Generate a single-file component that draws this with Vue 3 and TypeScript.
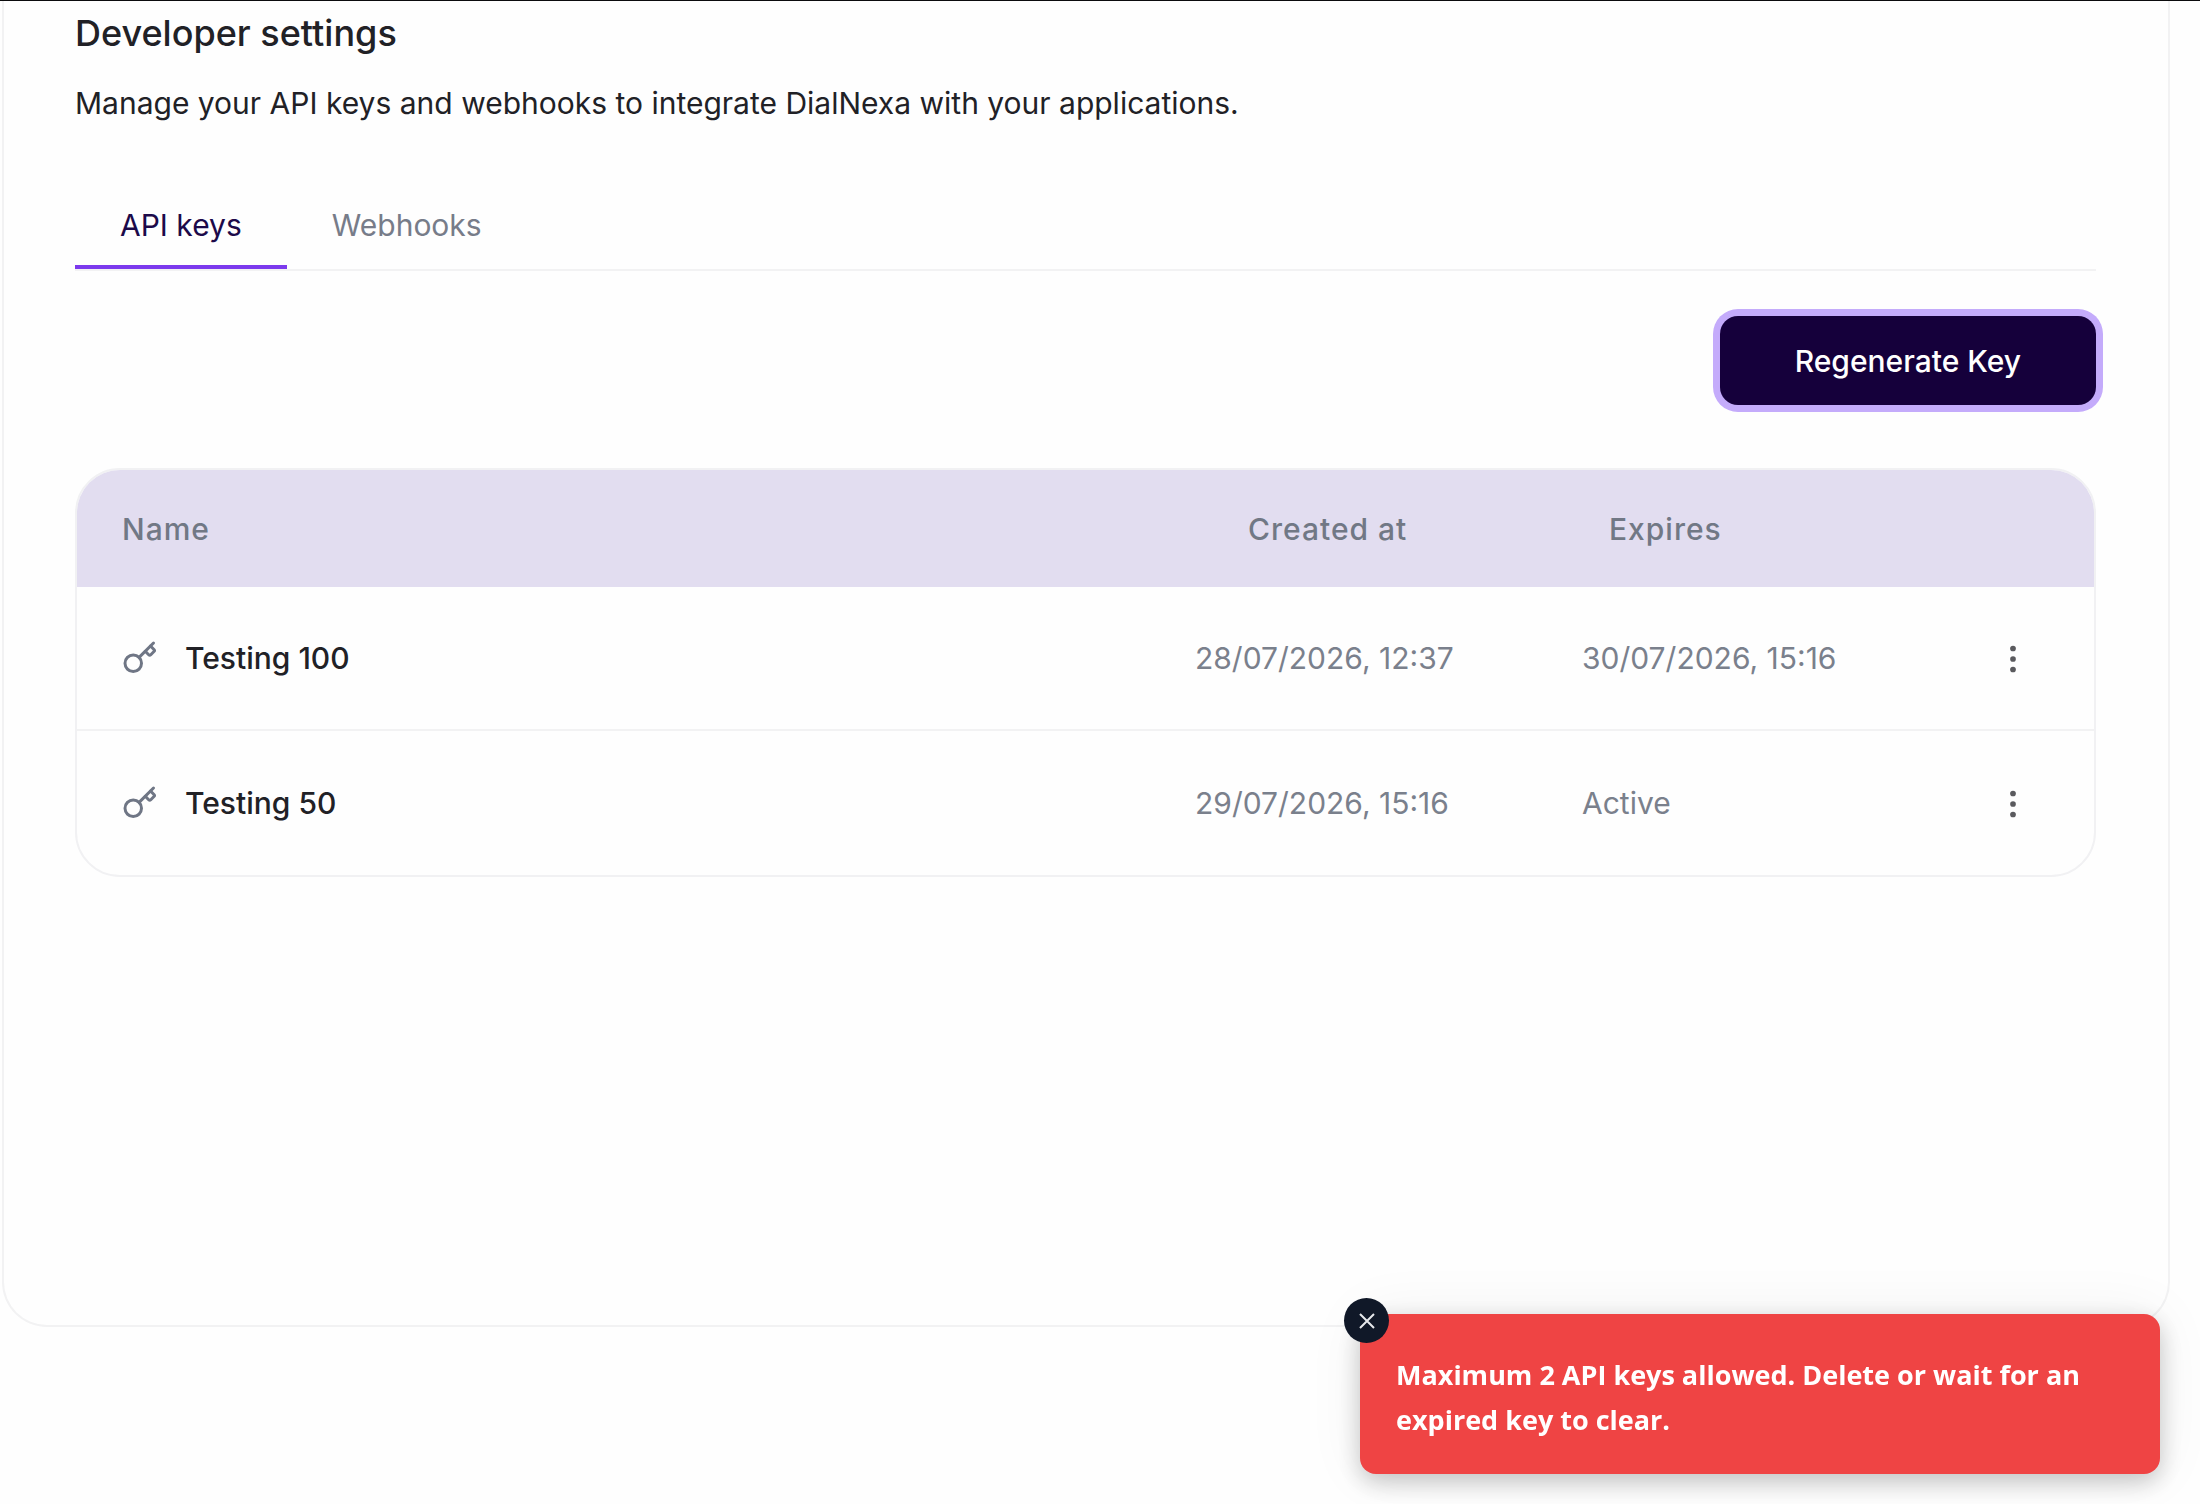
<script setup lang="ts">
import { ref } from 'vue'

interface ApiKey {
  id: number
  name: string
  createdAt: string
  expires: string
}

type TabId = 'keys' | 'webhooks'

const tabs: { id: TabId; label: string }[] = [
  { id: 'keys', label: 'API keys' },
  { id: 'webhooks', label: 'Webhooks' },
]

const activeTab = ref<TabId>('keys')
const toastVisible = ref(true)

const apiKeys: ApiKey[] = [
  { id: 1, name: 'Testing 100', createdAt: '28/07/2026, 12:37', expires: '30/07/2026, 15:16' },
  { id: 2, name: 'Testing 50', createdAt: '29/07/2026, 15:16', expires: 'Active' },
]
</script>

<template>
  <div class="page">
    <main class="panel">
      <h1 class="title">Developer settings</h1>
      <p class="subtitle">
        Manage your API keys and webhooks to integrate DialNexa with your applications.
      </p>

      <div class="tabs" role="tablist">
        <button
          v-for="tab in tabs"
          :key="tab.id"
          type="button"
          role="tab"
          class="tab"
          :class="{ active: activeTab === tab.id }"
          :aria-selected="activeTab === tab.id"
          @click="activeTab = tab.id"
        >
          {{ tab.label }}
        </button>
      </div>

      <div class="actions">
        <button type="button" class="primary" @click="toastVisible = true">Regenerate Key</button>
      </div>

      <div class="table-frame">
        <table class="keys">
          <thead>
            <tr>
              <th scope="col">Name</th>
              <th scope="col" class="created">Created at</th>
              <th scope="col" class="expires">Expires</th>
              <th class="menu-col" aria-label="Actions"></th>
            </tr>
          </thead>
          <tbody>
            <tr v-for="key in apiKeys" :key="key.id">
              <td>
                <div class="key-name">
                  <svg class="icon" viewBox="0 0 24 24" aria-hidden="true">
                    <path d="m15.5 7.5 2.3 2.3a1 1 0 0 0 1.4 0l2.1-2.1a1 1 0 0 0 0-1.4L19 4" />
                    <path d="m21 2-9.6 9.6" />
                    <circle cx="7.5" cy="15.5" r="5.5" />
                  </svg>
                  <span>{{ key.name }}</span>
                </div>
              </td>
              <td class="muted">{{ key.createdAt }}</td>
              <td class="muted">{{ key.expires }}</td>
              <td class="menu-col">
                <button type="button" class="menu" :aria-label="`Options for ${key.name}`">
                  <svg class="dots" viewBox="0 0 24 24" aria-hidden="true">
                    <circle cx="12" cy="5" r="1.9" />
                    <circle cx="12" cy="12" r="1.9" />
                    <circle cx="12" cy="19" r="1.9" />
                  </svg>
                </button>
              </td>
            </tr>
          </tbody>
        </table>
      </div>
    </main>

    <div v-if="toastVisible" class="toast" role="alert">
      <button type="button" class="close" aria-label="Close" @click="toastVisible = false">
        <svg viewBox="0 0 24 24" aria-hidden="true">
          <path d="M5 5 19 19M19 5 5 19" />
        </svg>
      </button>
      <p>Maximum 2 API keys allowed. Delete or wait for an expired key to clear.</p>
    </div>
  </div>
</template>

<style>
body {
  margin: 0;
  background: #fefefe;
}
</style>

<style scoped>
.page {
  box-sizing: border-box;
  display: flex;
  flex-direction: column;
  min-height: 100vh;
  padding: 0 30px 177px 2px;
  box-shadow: inset 0 1px 0 #0b0b0d;
  color: #212126;
  font-family: 'Inter', 'Liberation Sans', sans-serif;
  font-size: 30px;
  line-height: 44px;
}

button {
  margin: 0;
  border: 0;
  background: none;
  font: inherit;
  cursor: pointer;
}

.panel {
  flex: 1;
  margin-top: 1px;
  padding: 10px 72px 72px 71px;
  border: 2px solid #f2f2f3;
  border-top: 0;
  border-radius: 0 0 45px 45px;
}

.title {
  margin: 0 0 26px;
  font-size: 36px;
  font-weight: 500;
}

.subtitle {
  margin: 0 0 58px;
}

.tabs {
  display: flex;
  border-bottom: 2px solid #f2f2f3;
}

.tab {
  padding: 20px 45px 18px;
  border-bottom: 4px solid transparent;
  color: #777c89;
}

.tab.active {
  border-bottom-color: #7c3aed;
  color: #1c0a4a;
}

.actions {
  display: flex;
  justify-content: flex-end;
  padding: 45px 0 63px;
}

.primary {
  padding: 23px 75px 22px;
  border-radius: 18px;
  background: #15003b;
  box-shadow: 0 0 0 7px #c4abfb;
  color: #ffffff;
  font-weight: 500;
}

.table-frame {
  overflow: hidden;
  border: 2px solid #f1f1f3;
  border-radius: 45px;
}

.keys {
  width: 100%;
  border-collapse: separate;
  border-spacing: 0;
  table-layout: fixed;
}

th,
td {
  box-sizing: border-box;
  height: 144px;
  padding: 0 0 0 45px;
  text-align: left;
  white-space: nowrap;
}

th {
  height: 117px;
  background: #e2ddf0;
  color: #717885;
  font-weight: 500;
  letter-spacing: 1px;
}

.created {
  width: 387px;
  padding-left: 98px;
}

.expires {
  width: 395px;
  padding-left: 72px;
}

.menu-col {
  width: 162px;
  padding: 0;
  text-align: center;
}

tbody tr:not(:last-child) td {
  border-bottom: 2px solid #f2f2f3;
}

.key-name {
  display: flex;
  align-items: center;
  gap: 27px;
  font-weight: 500;
}

.muted {
  color: #7a808c;
}

.icon {
  width: 36px;
  height: 36px;
  fill: none;
  stroke: #6f7685;
  stroke-width: 2;
  stroke-linecap: round;
  stroke-linejoin: round;
}

.menu {
  padding: 4px;
  vertical-align: middle;
}

.dots {
  display: block;
  width: 36px;
  height: 36px;
  fill: #5a5a5e;
}

.toast {
  position: fixed;
  right: 40px;
  bottom: 30px;
  box-sizing: border-box;
  width: 800px;
  max-width: calc(100vw - 80px);
  padding: 38px 36px 32px;
  border-radius: 16px;
  background: #ef4444;
  box-shadow: 0 8px 24px rgba(0, 0, 0, 0.22), 0 0 60px rgba(0, 0, 0, 0.06);
  color: #ffffff;
  font-family: 'Open Sans', 'Noto Sans', sans-serif;
  font-size: 27px;
  font-weight: 700;
  line-height: 45px;
}

.toast p {
  margin: 0;
}

.close {
  position: absolute;
  top: -16px;
  left: -16px;
  display: grid;
  place-items: center;
  width: 45px;
  height: 45px;
  padding: 0;
  border-radius: 50%;
  background: #101828;
}

.close svg {
  width: 24px;
  height: 24px;
  fill: none;
  stroke: #e6e8ec;
  stroke-width: 2;
}
</style>
